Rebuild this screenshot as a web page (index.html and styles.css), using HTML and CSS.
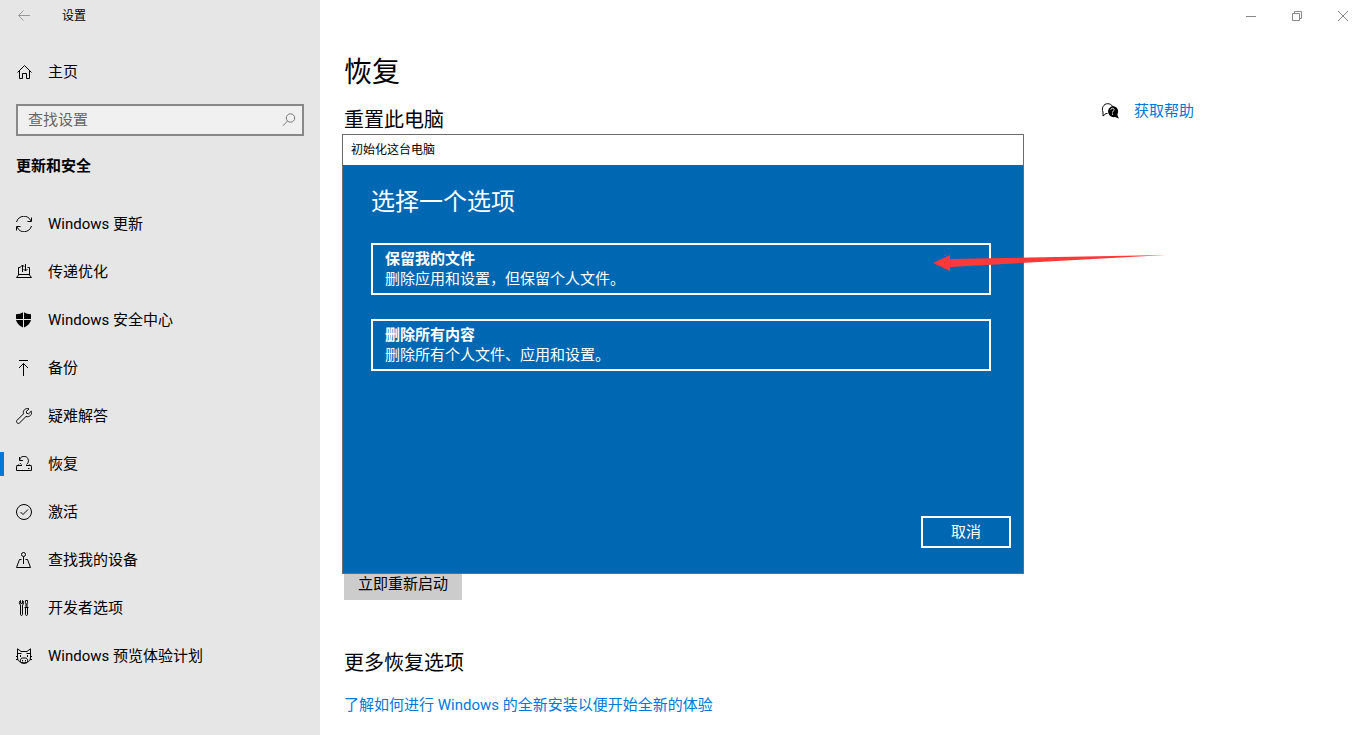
FILE: index.html
```html
<!DOCTYPE html>
<html lang="zh-CN">
<head>
    <meta charset="UTF-8">
    <meta name="viewport" content="width=device-width, initial-scale=1.0">
    <title>设置</title>
    <link rel="stylesheet" href="styles.css">
</head>
<body>
    <div class="window">
        <!-- 左侧导航 -->
        <aside class="sidebar">
            <div class="titlebar">
                <button class="back" aria-label="返回">
                    <svg class="icon" viewBox="0 0 16 16"><path d="M14 7.500H2.500M7.500 2.500l-5 5 5 5"/></svg>
                </button>
                <span>设置</span>
            </div>
            <a href="#" class="nav-item home">
                <svg class="icon" viewBox="0 0 16 16"><path d="M1.500 8.500l7-7 7 7M3.500 7v7.500h3v-5h4v5h3V7"/></svg>
                主页
            </a>
            <div class="search">
                <input type="text" placeholder="查找设置" aria-label="查找设置">
                <svg class="icon" viewBox="0 0 16 16"><circle cx="9.500" cy="6" r="4.200"/><path d="M6.500 9L2 13.800"/></svg>
            </div>
            <h2 class="group">更新和安全</h2>
            <nav>
                <a href="#" class="nav-item">
                    <svg class="icon" viewBox="0 0 16 16"><path d="M.5 6C2.500-1 12-2 15 5M15.500 1.500v4h-4M15.500 10c-2 7-11.500 8-14.500 1M.5 14.500v-4h4"/></svg>
                    Windows 更新
                </a>
                <a href="#" class="nav-item">
                    <svg class="icon" viewBox="0 0 16 16"><path d="M4.500 3.500h-2v7.500L.5 13.500h15l-2-2.500V3.500h-2M2.500 10.500h11M6.500 8V1M4.500 3l2-2 2 2M9.500 0v7M7.500 5l2 2 2-2"/></svg>
                    传递优化
                </a>
                <a href="#" class="nav-item">
                    <svg class="icon solid" viewBox="0 0 16 16"><path d="M0 2.200Q4.500 2.200 7 .2V7H0zM8 .2Q10.500 2.200 15 2.200V7H8zM0 8h7v7.500Q1 12.500 0 8zM8 8h7q-1 4.500-7 7.500z"/></svg>
                    Windows 安全中心
                </a>
                <a href="#" class="nav-item">
                    <svg class="icon" viewBox="0 0 16 16"><path d="M3 .5h9M7.500 16V3.500M3 8l4.500-4.500L12 8"/></svg>
                    备份
                </a>
                <a href="#" class="nav-item">
                    <svg class="icon" viewBox="0 0 16 16"><path d="M13 .9C9.500-.5 6.500 2.500 7.500 5.800L1 12.300c-1.600 1.700.9 4.200 2.600 2.600L10 8.500c3.500 1 6.500-2 5.300-5.300L12.600 5.800 10.700 5.300 10.300 3.400z"/></svg>
                    疑难解答
                </a>
                <a href="#" class="nav-item active">
                    <svg class="icon" viewBox="0 0 16 16"><path d="M3 8.500L.5 10.500v4h15v-4L13 8.500M.5 9.500H6M10 9.500h5.500M12 12.500h1.500M3.500 4.500A4.500 4.500 0 1 1 10.500 8.500M5.500 8.500A4.500 4.500 0 0 1 4 7M3.500 1v3.500H7"/></svg>
                    恢复
                </a>
                <a href="#" class="nav-item">
                    <svg class="icon" viewBox="0 0 16 16"><circle cx="8" cy="8" r="7.500"/><path d="M4.500 8L7 10.500 12 5.500"/></svg>
                    激活
                </a>
                <a href="#" class="nav-item">
                    <svg class="icon" viewBox="0 0 16 16"><circle cx="7.500" cy="2.500" r="2"/><path d="M7.500 4.500V12M5.500 7.500h-2l-3 8h14l-3-8h-2"/></svg>
                    查找我的设备
                </a>
                <a href="#" class="nav-item">
                    <svg class="icon" viewBox="0 0 16 16"><path d="M4.500.5C3 1 3 4 4.500 5v9.500c0 1.300 2 1.300 2 0V5C8 4 8 1 6.500.5v2.800h-2zM9.500.5h2v2l-.5 1.500v3.500h-1V4l-.5-1.500zM8.500 7.500h4M9.500 7.500v7c0 1.300 2 1.300 2 0v-7"/></svg>
                    开发者选项
                </a>
                <a href="#" class="nav-item">
                    <svg class="icon" viewBox="0 0 16 16"><path d="M1.500 10V.8L5 3.500h6L14.500.8V10M1.500 5.500h4M10.500 5.500h4M0 8.500h2M14 8.500h2M0 11.500h2M14 11.500h2M1.500 10c0 6.500 13 6.500 13 0M6 10c-2.500 1-2 5 .5 5.300h3C12 15 12.500 11 10 10zM4.500 7v2M11.500 7v2M6.500 12v1.500M9.500 12v1.500"/></svg>
                    Windows 预览体验计划
                </a>
            </nav>
        </aside>

        <div class="page">
            <div class="titlebar controls">
                <button aria-label="最小化"><svg viewBox="0 0 10 10"><path d="M0 5.500h10"/></svg></button>
                <button aria-label="还原"><svg viewBox="0 0 10 10"><path d="M.5 2.500h7v7h-7zM2.500 2.500v-2h7v7h-2"/></svg></button>
                <button aria-label="关闭"><svg viewBox="0 0 10 10"><path d="M0 0l10 10M10 0L0 10"/></svg></button>
            </div>
            <div class="columns">
                <main>
                    <h1>恢复</h1>
                    <section class="reset">
                        <h2>重置此电脑</h2>
                        <button class="restart">立即重新启动</button>

                        <!-- 初始化对话框 -->
                        <div class="dialog" role="dialog" aria-labelledby="dialogTitle">
                            <div class="dialog-title" id="dialogTitle">初始化这台电脑</div>
                            <div class="dialog-body">
                                <h3>选择一个选项</h3>
                                <button class="option">
                                    <strong>保留我的文件</strong>
                                    <span>删除应用和设置，但保留个人文件。</span>
                                </button>
                                <button class="option">
                                    <strong>删除所有内容</strong>
                                    <span>删除所有个人文件、应用和设置。</span>
                                </button>
                                <button class="cancel">取消</button>
                            </div>
                            <svg class="arrow" viewBox="0 0 234 18"><path d="M0 9L17 1v4L233 1 17 13v4z"/></svg>
                        </div>
                    </section>
                    <section class="more">
                        <h2>更多恢复选项</h2>
                        <a href="#">了解如何进行 Windows 的全新安装以便开始全新的体验</a>
                    </section>
                </main>
                <div class="help">
                    <svg class="help-icon" viewBox="0 0 17 16">
                        <path class="line" d="M5.500 10.500H4L1 13V9C-1 5 2 .7 5.500.7c2.500 0 4 1 5 2.500"/>
                        <path d="M10.500 3a5.500 5.500 0 0 1 5 8v1.500l1.500 3-4-1.500A5.500 5.500 0 1 1 10.500 3z"/>
                        <path class="mark" d="M8.800 6.800c0-2.200 3.500-2 3.300 0-.1 1.200-1.600 1.200-1.600 2.700M10.500 10.500v1.200"/>
                    </svg>
                    <a href="#">获取帮助</a>
                </div>
            </div>
        </div>
    </div>
</body>
</html>
```
FILE: styles.css
```css
* {
    box-sizing: border-box;
}
body {
    margin: 0;
    font-family: Roboto, "Noto Sans CJK SC", sans-serif;
    font-size: 15px;
    line-height: 20px;
    color: #000;
    background-color: #fff;
}
h1, h2, h3 {
    margin: 0;
    font-weight: normal;
}
a {
    color: #0078d7;
    text-decoration: none;
}
button {
    padding: 0;
    border: none;
    border-radius: 0;
    background: none;
    font: inherit;
    color: inherit;
}
svg {
    fill: none;
    stroke: currentColor;
    stroke-width: 1;
    flex-shrink: 0;
}
.window {
    display: flex;
    min-height: 100vh;
}
.titlebar {
    display: flex;
    align-items: center;
    height: 32px;
    font-size: 12px;
}
.icon {
    width: 16px;
    height: 16px;
}

/* 侧边栏 */
.sidebar {
    flex: 0 0 320px;
    background-color: #e6e6e6;
}
.back {
    display: flex;
    padding: 0 16px;
    margin-right: 14px;
    color: #999;
}
.nav-item {
    display: flex;
    align-items: center;
    gap: 16px;
    height: 48px;
    padding: 0 16px;
    color: #000;
}
.home {
    margin: 16px 0 8px;
}
.active {
    position: relative;
}
.active::before {
    content: "";
    position: absolute;
    left: 0;
    top: 12px;
    width: 4px;
    height: 24px;
    background-color: #0078d7;
}
.search {
    display: flex;
    align-items: center;
    height: 32px;
    margin: 0 16px;
    padding: 0 5px 0 10px;
    border: 2px solid #888;
    background-color: #f0f0f0;
    color: #777;
}
.search input {
    flex: 1;
    min-width: 0;
    padding: 0;
    border: none;
    outline: none;
    background: none;
    font: inherit;
}
.search input::placeholder {
    color: #666;
}
.group {
    padding: 20px 16px 24px;
    font-size: 15px;
    font-weight: bold;
    line-height: 20px;
}
.solid {
    fill: currentColor;
    stroke: none;
}

/* 右侧内容 */
.page {
    flex: 1;
    min-width: 0;
}
.controls {
    justify-content: flex-end;
    color: #888;
}
.controls button {
    display: flex;
    align-items: center;
    justify-content: center;
    width: 46px;
    height: 32px;
}
.controls svg {
    width: 10px;
    height: 10px;
}
.columns {
    display: flex;
    padding: 20px 24px;
}
main {
    flex: 0 1 758px;
}
h1 {
    font-size: 28px;
    line-height: 42px;
}
.reset h2, .more h2 {
    font-size: 20px;
    line-height: 30px;
}
.reset {
    position: relative;
    display: flex;
    flex-direction: column;
    align-items: flex-start;
    justify-content: space-between;
    height: 495px;
    margin-top: 11px;
}
.restart {
    height: 32px;
    padding: 0 14px;
    background-color: #ccc;
}
.more {
    padding-top: 48px;
}
.more a {
    display: block;
    margin-top: 17px;
}
.help {
    display: flex;
    align-items: center;
    align-self: flex-start;
    gap: 15px;
    margin-top: 49px;
}
.help-icon {
    width: 17px;
    height: 16px;
    fill: #000;
    stroke: none;
}
.help-icon .line {
    fill: none;
    stroke: #000;
}
.help-icon .mark {
    fill: none;
    stroke: #fff;
}

/* 对话框 */
.dialog {
    position: absolute;
    top: 29px;
    left: -2px;
    display: flex;
    flex-direction: column;
    width: 682px;
    height: 440px;
    border: 1px solid #6b6b6b;
    background-color: #fff;
}
.dialog-title {
    padding: 5px 8px;
    font-size: 12px;
}
.dialog-body {
    display: flex;
    flex: 1;
    flex-direction: column;
    padding: 20px 12px 25px 28px;
    background-color: #0067b3;
    color: #fff;
}
.dialog-body h3 {
    margin-bottom: 24px;
    font-size: 24px;
    line-height: 34px;
}
.option {
    display: flex;
    flex-direction: column;
    margin: 0 20px 24px 0;
    padding: 4px 12px;
    border: 2px solid #fff;
    text-align: left;
}
.cancel {
    align-self: flex-end;
    width: 90px;
    height: 32px;
    margin-top: auto;
    border: 2px solid #fff;
}
.arrow {
    position: absolute;
    top: 119px;
    left: 590px;
    width: 234px;
    height: 18px;
    fill: #ff3838;
    stroke: none;
}
```
